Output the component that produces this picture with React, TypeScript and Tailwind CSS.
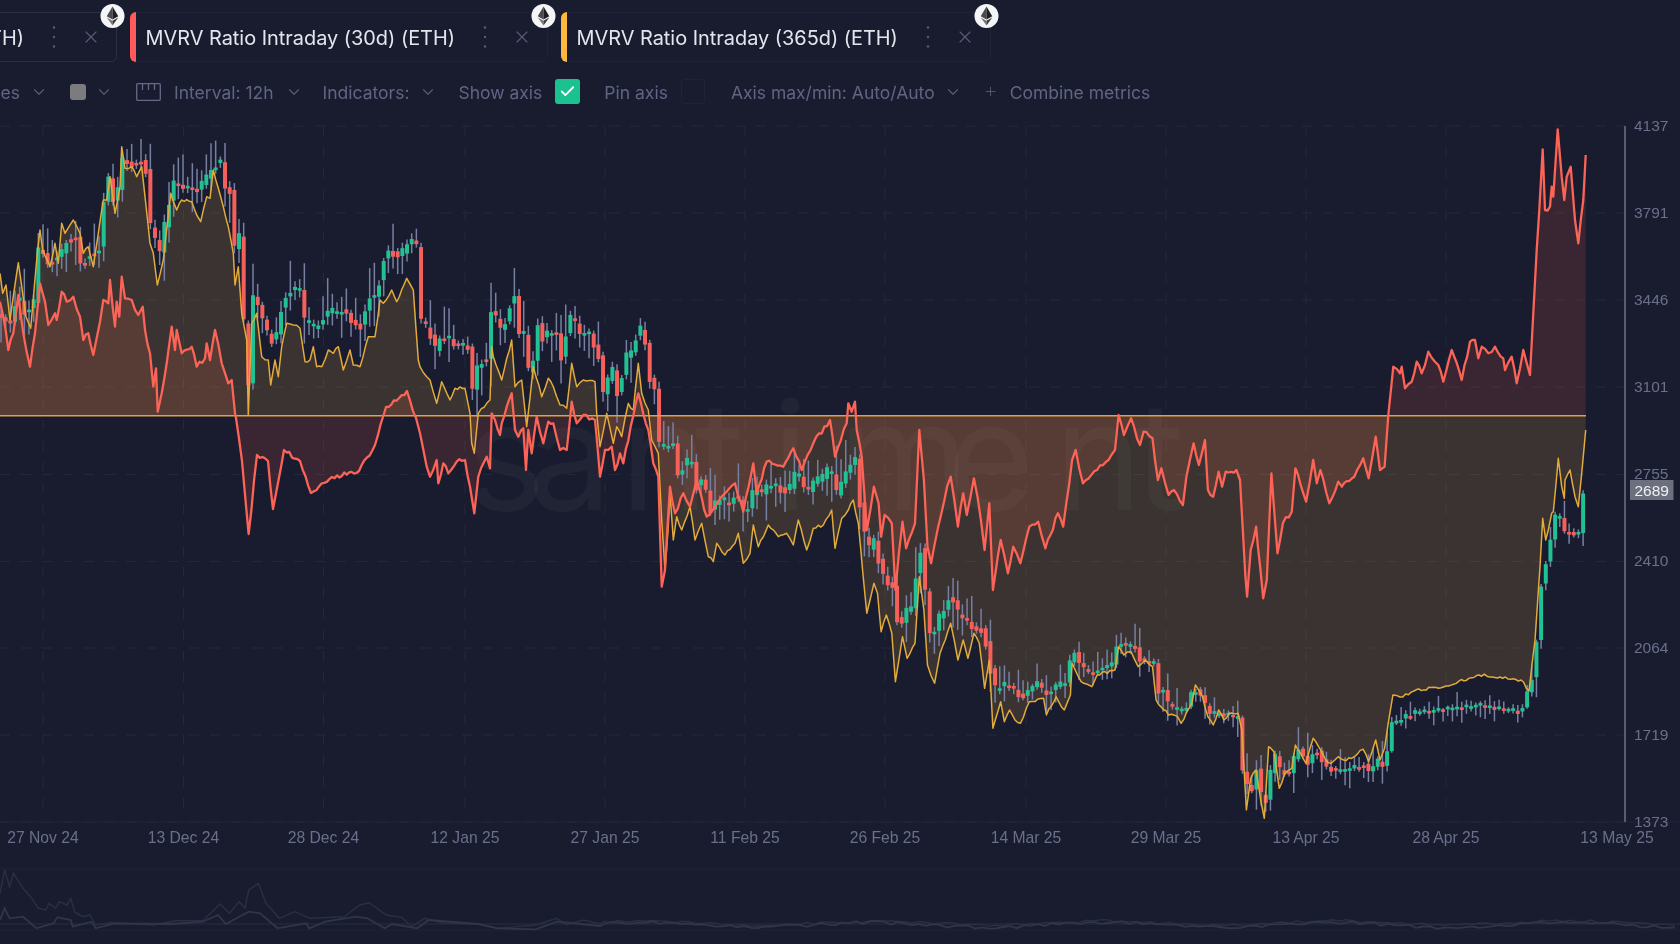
import React from "react";
import { Check, ChevronDown, Plus, X } from "lucide-react";

type P = [number, number];

let seed = 12345;
const rnd = () => {
  seed = (seed * 1664525 + 1013904223) % 4294967296;
  return seed / 4294967296;
};

// flat list in a crop's coordinates -> page coordinates
const z = (f: number[], sx: number, ox: number, sy: number, oy: number): P[] => {
  const r: P[] = [];
  for (let i = 0; i < f.length; i += 2) r.push([f[i] / sx + ox, f[i + 1] / sy + oy]);
  return r;
};
const z3 = (f: number[]) => z(f, 3, 0, 3, 120);
const z6 = (f: number[]) => z(f, 3, 420, 3, 280);
const z7 = (f: number[]) => z(f, 2.8, 840, 3, 380);
const z4 = (f: number[]) => z(f, 3, 1380, 3, 110);
const full = (f: number[]) => z(f, 1, 0, 1, 0);
const clip = (p: P[], a: number, b: number) => p.filter((q) => q[0] >= a && q[0] < b);

const densify = (pts: P[], amp: number): P[] => {
  const r: P[] = [];
  for (let i = 0; i < pts.length - 1; i++) {
    const [x0, y0] = pts[i];
    const [x1, y1] = pts[i + 1];
    r.push(pts[i]);
    const n = Math.floor((x1 - x0) / 2.4);
    for (let k = 1; k < n; k++) {
      const t = k / n;
      r.push([x0 + (x1 - x0) * t, y0 + (y1 - y0) * t + (rnd() - 0.5) * amp]);
    }
  }
  r.push(pts[pts.length - 1]);
  return r;
};

const red: P[] = densify(
  [
    ...clip(z3([0,545,10,590,25,690,40,640,55,525,70,640,90,740,105,640,120,490,135,545,145,615,165,580,170,600,185,515,200,545,220,530,240,590,250,660,265,640,280,705,300,605,310,540,325,550,330,480,345,620,350,545,358,590,365,470,375,535,395,540,415,585,428,560,435,630,450,700,460,800,468,745,473,875,485,820,500,730,515,620,525,690,530,630,545,700,575,680,590,740,615,715,620,670,630,720,645,630,665,730,685,790,695,780,705,880]), 0, 236),
    ...full([236,418,242,461,248.6,534,257,455,268,461,273,509,284,450,300,461,311,493,332,477,359,471,375,445,386,407,407,391,416,418]),
    ...clip(z6([0,460,20,560,30,590,50,540,55,610,70,550,85,580,110,545,135,540,150,620,163,700,175,590,200,530,210,565,215,400,225,420,240,465,245,430,260,380,275,340,285,450,295,470,310,445,318,570,325,450,335,520,350,410,370,490,385,425,400,430,420,510,440,510,455,365,470,430,490,405,525,420,540,590,555,510,575,500,585,570,600,520,610,550,655,340,685,450,700,550,715,590,725,920,735,870,745,700,750,620,765,700,790,640,810,680,830,600,860,710,885,680,905,650,945,610,970,695,1000,550,1010,640,1040,545,1090,560,1120,505,1145,570,1180,490,1230,420,1245,530,1280,430,1285,370,1295,395,1305,365,1310,450,1325,530]), 420, 862),
    ...clip(z7([75,450,95,320,108,370,115,470,125,405,145,430,155,630,175,425,185,505,210,430,222,150,235,300,245,500,255,550,275,440,300,320,310,290,330,440,345,340,355,405,375,295,385,350,405,510,418,370,428,630,450,480,470,580,485,500,505,550,530,440,555,425,575,505,610,400,625,440,650,240,660,210,680,310,720,270,760,225,770,210,780,105,795,165,815,115,840,195,850,155,875,175,890,300,900,265,920,345,935,330,960,375,970,290,990,190,1005,255,1022,180,1030,330,1045,350,1060,275,1070,320,1080,275,1110,270,1120,300,1135,590,1140,650,1150,510,1165,440,1170,500,1185,655,1195,600,1208,280,1215,380,1225,520,1240,430,1265,395,1275,265,1305,365,1325,240,1335,310,1345,270,1370,370,1395,305,1405,320,1440,290,1465,235,1480,295,1500,170,1512,270,1525,260]), 862, 1386),
    ...clip(z4([25,915,40,770,60,790,65,770,75,835,95,815,110,755,125,790,135,765,145,725,165,755,175,765,190,815,215,720,245,810,270,695,285,690,295,745,305,710,325,730,345,710,370,745,375,780,395,740,410,820,430,720,450,795,460,610,470,420,478,300,488,118,495,300,510,290,515,230,520,260,533,58,545,200,553,270,560,200,572,170,585,330,595,400,610,270,617,135]), 1386, 1700),
  ],
  5
);

const yellow: P[] = densify(
  [
    ...clip(z3([0,460,8,520,18,495,30,600,55,428,78,590,92,625,112,400,120,330,128,390,150,440,165,370,175,430,185,310,195,340,220,300,240,340,250,400,265,380,280,440,295,340,310,240,320,240,330,170,345,280,360,200,365,80,375,145,395,140,410,170,425,140,435,230,450,370,460,400,472,495,490,420,512,220,530,270,545,240,575,245,590,285,602,305,620,230,630,235,640,150,655,205,670,260,685,320,700,400,705,495,715,440,725,580,740,660,745,885,755,610,770,580,785,710,805,720,812,795,825,720,835,770,845,680,860,610,880,615,900,625,915,725,930,720,940,680,950,740,965,740,985,690,1000,700,1015,680,1030,750,1050,690,1060,735,1080,740,1105,650,1125,650,1140,540,1150,550,1175,510,1190,545,1220,475,1240,510,1255,720]), 0, 420),
    ...clip(z6([0,260,20,290,30,300,50,370,65,305,90,360,105,325,135,325,150,400,155,490,163,520,175,400,210,360,215,200,220,230,245,300,275,180,285,320,305,300,320,440,340,260,365,350,385,295,400,320,420,375,440,385,455,250,470,320,490,300,525,305,530,400,540,500,560,400,580,490,590,440,605,470,625,370,640,390,655,250,665,340,685,390,695,480,715,520,725,720,735,870,745,740,750,640,760,780,770,710,785,750,810,680,825,780,845,730,865,830,880,845,890,790,915,825,945,790,955,760,970,850,990,820,1000,735,1015,800,1045,735,1075,770,1100,760,1120,795,1135,720,1160,810,1180,745,1210,735,1235,690,1245,805,1265,715,1285,690,1300,660,1315,730]), 420, 860),
    ...clip(z7([55,470,65,590,75,700,95,610,105,640,115,755,130,705,145,760,155,905,175,770,188,835,210,790,222,590,235,690,245,855,265,910,280,820,310,730,330,840,345,780,358,835,375,760,390,790,405,925,418,840,428,1045,450,965,460,1025,475,990,490,1020,505,1030,530,965,570,955,578,1005,605,950,628,990,645,945,650,850,675,905,705,920,720,885,770,870,780,800,795,825,815,815,835,860,855,840,875,860,885,960,920,1005,945,1010,955,1030,985,970,995,915,1015,950,1030,1010,1045,1035,1060,990,1075,1020,1090,1000,1115,1000,1125,1050,1138,1290,1150,1195,1165,1170,1178,1260,1188,1315,1200,1100,1215,1115,1230,1225,1245,1180,1265,1165,1275,1095,1305,1150,1325,1075,1340,1100,1360,1140,1375,1150,1395,1130,1410,1140,1440,1130,1465,1108,1480,1145,1500,1080,1512,1140,1525,1105,1535,1030,1548,945]), 860, 1396),
    ...full([1400,697,1414,691,1446,686,1479,675,1500,677,1521,680,1529,691,1535,640]),
    ...clip(z4([480,1370,488,1225,497,1290,505,1260,515,1210,520,1205,535,1045,545,1130,553,1165,555,1110,570,1080,585,1160,595,1190,605,1090,617,960]), 1536, 1700),
  ],
  3
);

const mid: P[] = [
  ...clip(z3([0,590,30,610,50,520,70,570,100,560,115,390,130,400,145,430,185,400,200,355,230,350,240,430,270,400,295,400,310,250,325,175,345,270,365,120,400,130,420,120,435,120,450,320,480,400,505,250,520,190,590,210,615,185,640,130,672,125,672,200,698,215,700,400,712,350,725,350,735,780,755,800,755,525,770,545,800,640,825,670,840,570,865,510,905,510,905,600,945,630,975,580,1005,580,1030,565,1060,610,1090,615,1100,530,1130,530,1145,425,1170,385,1200,415,1225,365,1240,360,1255,395,1255,600]), 0, 420),
  ...clip(z6([0,120,30,160,50,230,60,170,80,170,100,190,145,200,150,355,165,300,175,240,205,235,215,60,230,130,250,165,260,85,285,45,290,160,315,165,320,290,340,240,350,120,370,180,385,155,410,160,425,240,440,140,460,95,470,165,515,160,525,215,535,225,550,350,575,260,590,340,620,230,640,210,650,150,670,150,690,300,715,350,720,700,730,500,760,490,770,590,790,550,815,545,830,620,855,580,860,700,880,680,900,660,925,675,945,640,970,690,995,680,1000,600,1020,650,1050,610,1090,625,1105,640,1120,590,1140,590,1160,645,1180,610,1205,600,1230,560,1250,650,1270,590,1300,540,1315,530,1315,630]), 420, 860),
  ...clip(z7([65,460,85,520,95,480,115,570,125,600,150,620,165,760,180,700,205,680,220,465,235,580,245,750,260,770,270,730,295,680,310,630,325,700,350,720,375,745,400,745,420,840,425,950,440,920,470,915,510,950,555,905,570,945,605,920,635,905,645,835,660,810,672,860,700,880,720,870,770,850,775,785,835,805,840,840,880,850,885,930,905,930,920,980,965,995,990,920,1020,960,1025,1000,1075,1000,1120,1015,1125,1170,1150,1245,1165,1160,1180,1250,1200,1265,1210,1100,1230,1170,1260,1180,1280,1100,1310,1150,1330,1100,1360,1160,1395,1170,1430,1165,1470,1150,1480,1175,1510,1140,1525,1170,1530,1130,1540,1040]), 860, 1392),
  ...full([1392,723,1414,712,1479,705,1521,712,1534,670,1541,584,1555,518,1560,518,1562,532,1573,532,1578,537,1583,492]),
];

const at = (x: number) => {
  for (let i = 0; i < mid.length - 1; i++) {
    const [x0, y0] = mid[i];
    const [x1, y1] = mid[i + 1];
    if (x <= x1 && x1 > x0) return y0 + ((y1 - y0) * (x - x0)) / (x1 - x0);
  }
  return mid[mid.length - 1][1];
};

const STEP = 4.667;
const candles: { x: number; top: number; h: number; up: boolean; wt: number; wb: number }[] = [];
for (let x = 1; x < 1584; x += STEP) {
  const calm = x > 1390 && x < 1530 ? 0.45 : x > 1000 ? 0.7 : 1;
  const o = at(x - STEP);
  const c = at(x) + (rnd() - 0.5) * 11 * calm;
  const top = Math.min(o, c);
  const h = Math.max(Math.abs(o - c), 2.6);
  const a = rnd();
  const b = rnd();
  candles.push({ x, top, h, up: c < o, wt: top - (3 + a * a * 30) * calm, wb: top + h + (3 + b * b * 26) * calm });
}

const BASE = 415.7;
const line = (p: P[]) => p.map((q, i) => `${i ? "L" : "M"}${q[0].toFixed(1)} ${q[1].toFixed(1)}`).join("");
const area = (p: P[]) => `${line(p)}L${p[p.length - 1][0].toFixed(1)} ${BASE}L${p[0][0].toFixed(1)} ${BASE}Z`;

const yTicks: [string, number][] = [["4137",126],["3791",213],["3446",300],["3101",387],["2755",474.5],["2410",561.5],["2064",648],["1719",735],["1373",822]];
const xTicks: [string, number][] = [["27 Nov 24",43],["13 Dec 24",183.5],["28 Dec 24",323.5],["12 Jan 25",465],["27 Jan 25",605],["11 Feb 25",745],["26 Feb 25",885],["14 Mar 25",1026],["29 Mar 25",1166],["13 Apr 25",1306],["28 Apr 25",1446],["13 May 25",1617]];

// minimap (y relative to the page)
const mini = (f: number[]) => z(f, 2.613, 0, 3, 800);
const miniFill = (base: number, amp: number): P[] => {
  const r: P[] = [];
  for (let x = 604; x <= 1680; x += 7) r.push([x, base + Math.sin(x / 37) * amp + (rnd() - 0.5) * amp * 1.4]);
  return r;
};
const miniA = [...mini([0,280,12,210,25,260,35,220,60,265,80,290,100,325,120,330,128,310,145,325,155,305,175,315,185,295,195,335,215,350,235,345,250,375,290,368,400,375,460,362,530,362,575,312,600,340,625,305,640,325,650,270,675,250,695,310,730,355,770,335,810,355,900,350,940,315,965,308,1010,345,1050,352,1075,380,1110,355,1160,370,1250,372,1300,385,1400,375,1455,355,1480,375,1525,360,1568,372]), ...miniFill(923, 2)];
const miniB = [...mini([0,360,12,325,25,355,60,350,95,385,140,370,150,352,185,360,190,380,240,365,250,385,300,370,450,372,530,365,570,345,590,372,625,350,650,335,680,340,725,385,800,370,808,385,850,365,930,350,960,355,1005,385,1025,372,1090,385,1120,360,1250,372,1300,385,1400,388,1455,365,1568,378]), ...miniFill(925, 2.4)];

const EthBadge = () => (
  <svg viewBox="0 0 26 26" className="absolute right-[-9px] top-[-10px] h-[26px] w-[25px]">
    <circle cx="13" cy="13" r="12.5" fill="#f4f5f6" />
    <polygon points="13,3 7,13.2 13,16.6" fill="#4a4a4c" />
    <polygon points="13,3 19,13.2 13,16.6" fill="#1f1f21" />
    <polygon points="7,14.6 13,23 13,18" fill="#77777a" />
    <polygon points="19,14.6 13,23 13,18" fill="#3a3a3c" />
  </svg>
);

const Dots = () => (
  <svg viewBox="0 0 4 24" className="h-[24px] w-[4px]">
    <circle cx="2" cy="2.5" r="1.2" fill="#565c78" />
    <circle cx="2" cy="12" r="1.2" fill="#565c78" />
    <circle cx="2" cy="21.5" r="1.2" fill="#565c78" />
  </svg>
);

const Tab = ({ label, bar, border }: { label: string; bar: string; border: string }) => (
  <div className={`relative flex h-[50px] shrink-0 items-center rounded-[6px] border ${border}`}>
    <span className={`h-[50px] w-[6px] shrink-0 rounded-l-[6px] -ml-px ${bar}`} />
    <span className="ml-[10px] whitespace-nowrap pt-[3px] text-[19.9px] text-[#e4e6ee]">{label}</span>
    <span className="ml-[28px] flex"><Dots /></span>
    <X size={20} strokeWidth={1.4} className="ml-[25px] text-[#565c78]" />
    <span className="w-[15px]" />
    <EthBadge />
  </div>
);

const Chev = ({ className }: { className: string }) => <ChevronDown size={18} strokeWidth={1.5} className={`shrink-0 text-[#565c78] ${className}`} />;

const T = ({ className, children }: { className: string; children: React.ReactNode }) => (
  <span className={`whitespace-nowrap pt-[3px] ${className}`}>{children}</span>
);

export default function App() {
  return (
    <div className="h-[944px] w-[1680px] overflow-hidden bg-[#181c2e] font-['Inter',sans-serif]">
      <div className="blur-[0.5px]">
        <div className="flex gap-[12.5px] pt-3">
          <div className="flex w-[117px] shrink-0 justify-end">
            <Tab label="MVRV Ratio Intraday (7d) (ETH)" bar="bg-[#26c195]" border="border-[#2b2f44]" />
          </div>
          <Tab label="MVRV Ratio Intraday (30d) (ETH)" bar="bg-[#ff5b5b]" border="border-[#1f2337]" />
          <Tab label="MVRV Ratio Intraday (365d) (ETH)" bar="bg-[#ffb83d]" border="border-[#1f2337]" />
        </div>

        <div className="mt-[17px] flex h-[25px] items-center text-[17.5px] text-[#5f6583]">
          <div className="flex w-[48px] shrink-0 items-center justify-end">
            <T className="">Candles</T>
            <Chev className="ml-[10px]" />
          </div>
          <span className="ml-[22px] h-[16px] w-[16px] shrink-0 rounded-[3px] bg-[#7b7b80]" />
          <Chev className="ml-[9px]" />
          <svg viewBox="0 0 25 18" className="ml-[23px] h-[18px] w-[25px] shrink-0" fill="none" stroke="#636a88" strokeWidth="1.3">
            <rect x="0.7" y="0.7" width="23.6" height="16.6" rx="1" />
            <path d="M6.5 1v6M12.5 1v6M18.5 1v6" />
          </svg>
          <T className="ml-[13px]">Interval: 12h</T>
          <Chev className="ml-[11px]" />
          <T className="ml-[20px]">Indicators:</T>
          <Chev className="ml-[10px]" />
          <T className="ml-[21px]">Show axis</T>
          <span className="ml-[13px] flex h-[25px] w-[25px] shrink-0 items-center justify-center rounded-[3px] bg-[#1bc28f]">
            <Check size={17} strokeWidth={2.6} className="text-white" />
          </span>
          <T className="ml-[24px]">Pin axis</T>
          <span className="ml-[13px] h-[25px] w-[24px] shrink-0 rounded-[3px] border border-[#1f2337]" />
          <T className="ml-[26px]">Axis max/min: Auto/Auto</T>
          <Chev className="ml-[9px]" />
          <Plus size={15} strokeWidth={1.4} className="ml-[21px] shrink-0 text-[#565c78]" />
          <T className="ml-[12px]">Combine metrics</T>
        </div>

        <svg viewBox="0 118 1680 742" className="mt-[14px] block h-[742px] w-[1680px] font-['Liberation_Sans',sans-serif]">
          <text x="466 528 620 695 772 838 947 1054 1135" y="510" className="fill-white/[0.035] font-['Inter',sans-serif] text-[150px]">santiment</text>

          {yTicks.map(([, y]) => (
            <line key={y} x1="0" x2="1625" y1={y} y2={y} stroke="#23283d" strokeWidth="1" strokeDasharray="10 11" />
          ))}
          {xTicks.slice(0, 11).map(([, x]) => (
            <line key={x} x1={x} x2={x} y1="126" y2="816" stroke="#23283d" strokeWidth="1" strokeDasharray="10 11" />
          ))}
          <line x1="0" x2="1680" y1="822" y2="822" stroke="#20243a" strokeWidth="1" />

          <path d={area(red)} fill="#ff5d52" fillOpacity="0.15" />
          <path d={area(yellow)} fill="#ffbc42" fillOpacity="0.15" />

          {candles.map((c) => (
            <g key={c.x}>
              <line x1={c.x} x2={c.x} y1={c.wt} y2={c.wb} stroke="#7780a3" strokeWidth="1.5" />
              <rect x={c.x - 2} y={c.top} width="4" height={c.h} fill={c.up ? "#22c193" : "#f6605b"} />
            </g>
          ))}

          <line x1="0" x2="1586" y1={BASE} y2={BASE} stroke="#e0a244" strokeWidth="1.6" />
          <path d={line(yellow)} fill="none" stroke="#e2ab3b" strokeWidth="1.5" strokeLinejoin="round" />
          <path d={line(red)} fill="none" stroke="#fb6457" strokeWidth="2.3" strokeLinejoin="round" />

          <line x1="1625" x2="1625" y1="126" y2="822" stroke="#6a6e7d" strokeWidth="1.6" />
          {yTicks.map(([t, y]) => (
            <text key={t} x="1634" y={y - 1} dominantBaseline="central" className="fill-[#6a708c] text-[15.5px]">{t}</text>
          ))}
          <rect x="1630" y="480" width="43.5" height="20" fill="#6c6f7e" />
          <text x="1634.5" y="490.5" dominantBaseline="central" className="fill-[#f0f1f3] text-[15.5px]">2689</text>
          {xTicks.map(([t, x]) => (
            <text key={t} x={x} y="837.5" textAnchor="middle" dominantBaseline="central" className="fill-[#6a708c] text-[15.7px]">{t}</text>
          ))}
        </svg>

        <svg viewBox="0 860 1680 84" className="block h-[84px] w-[1680px]">
          <line x1="0" x2="1680" y1="869" y2="869" stroke="#1f2338" strokeWidth="1" />
          <line x1="0" x2="1680" y1="930" y2="930" stroke="#1f2338" strokeWidth="1" />
          <line x1="0" x2="1680" y1="924" y2="924" stroke="#282d43" strokeWidth="1" />
          <path d={line(miniA)} fill="none" stroke="#2a2f44" strokeWidth="1.4" />
          <path d={line(miniB)} fill="none" stroke="#2f354b" strokeWidth="1.8" />
        </svg>
      </div>
    </div>
  );
}
